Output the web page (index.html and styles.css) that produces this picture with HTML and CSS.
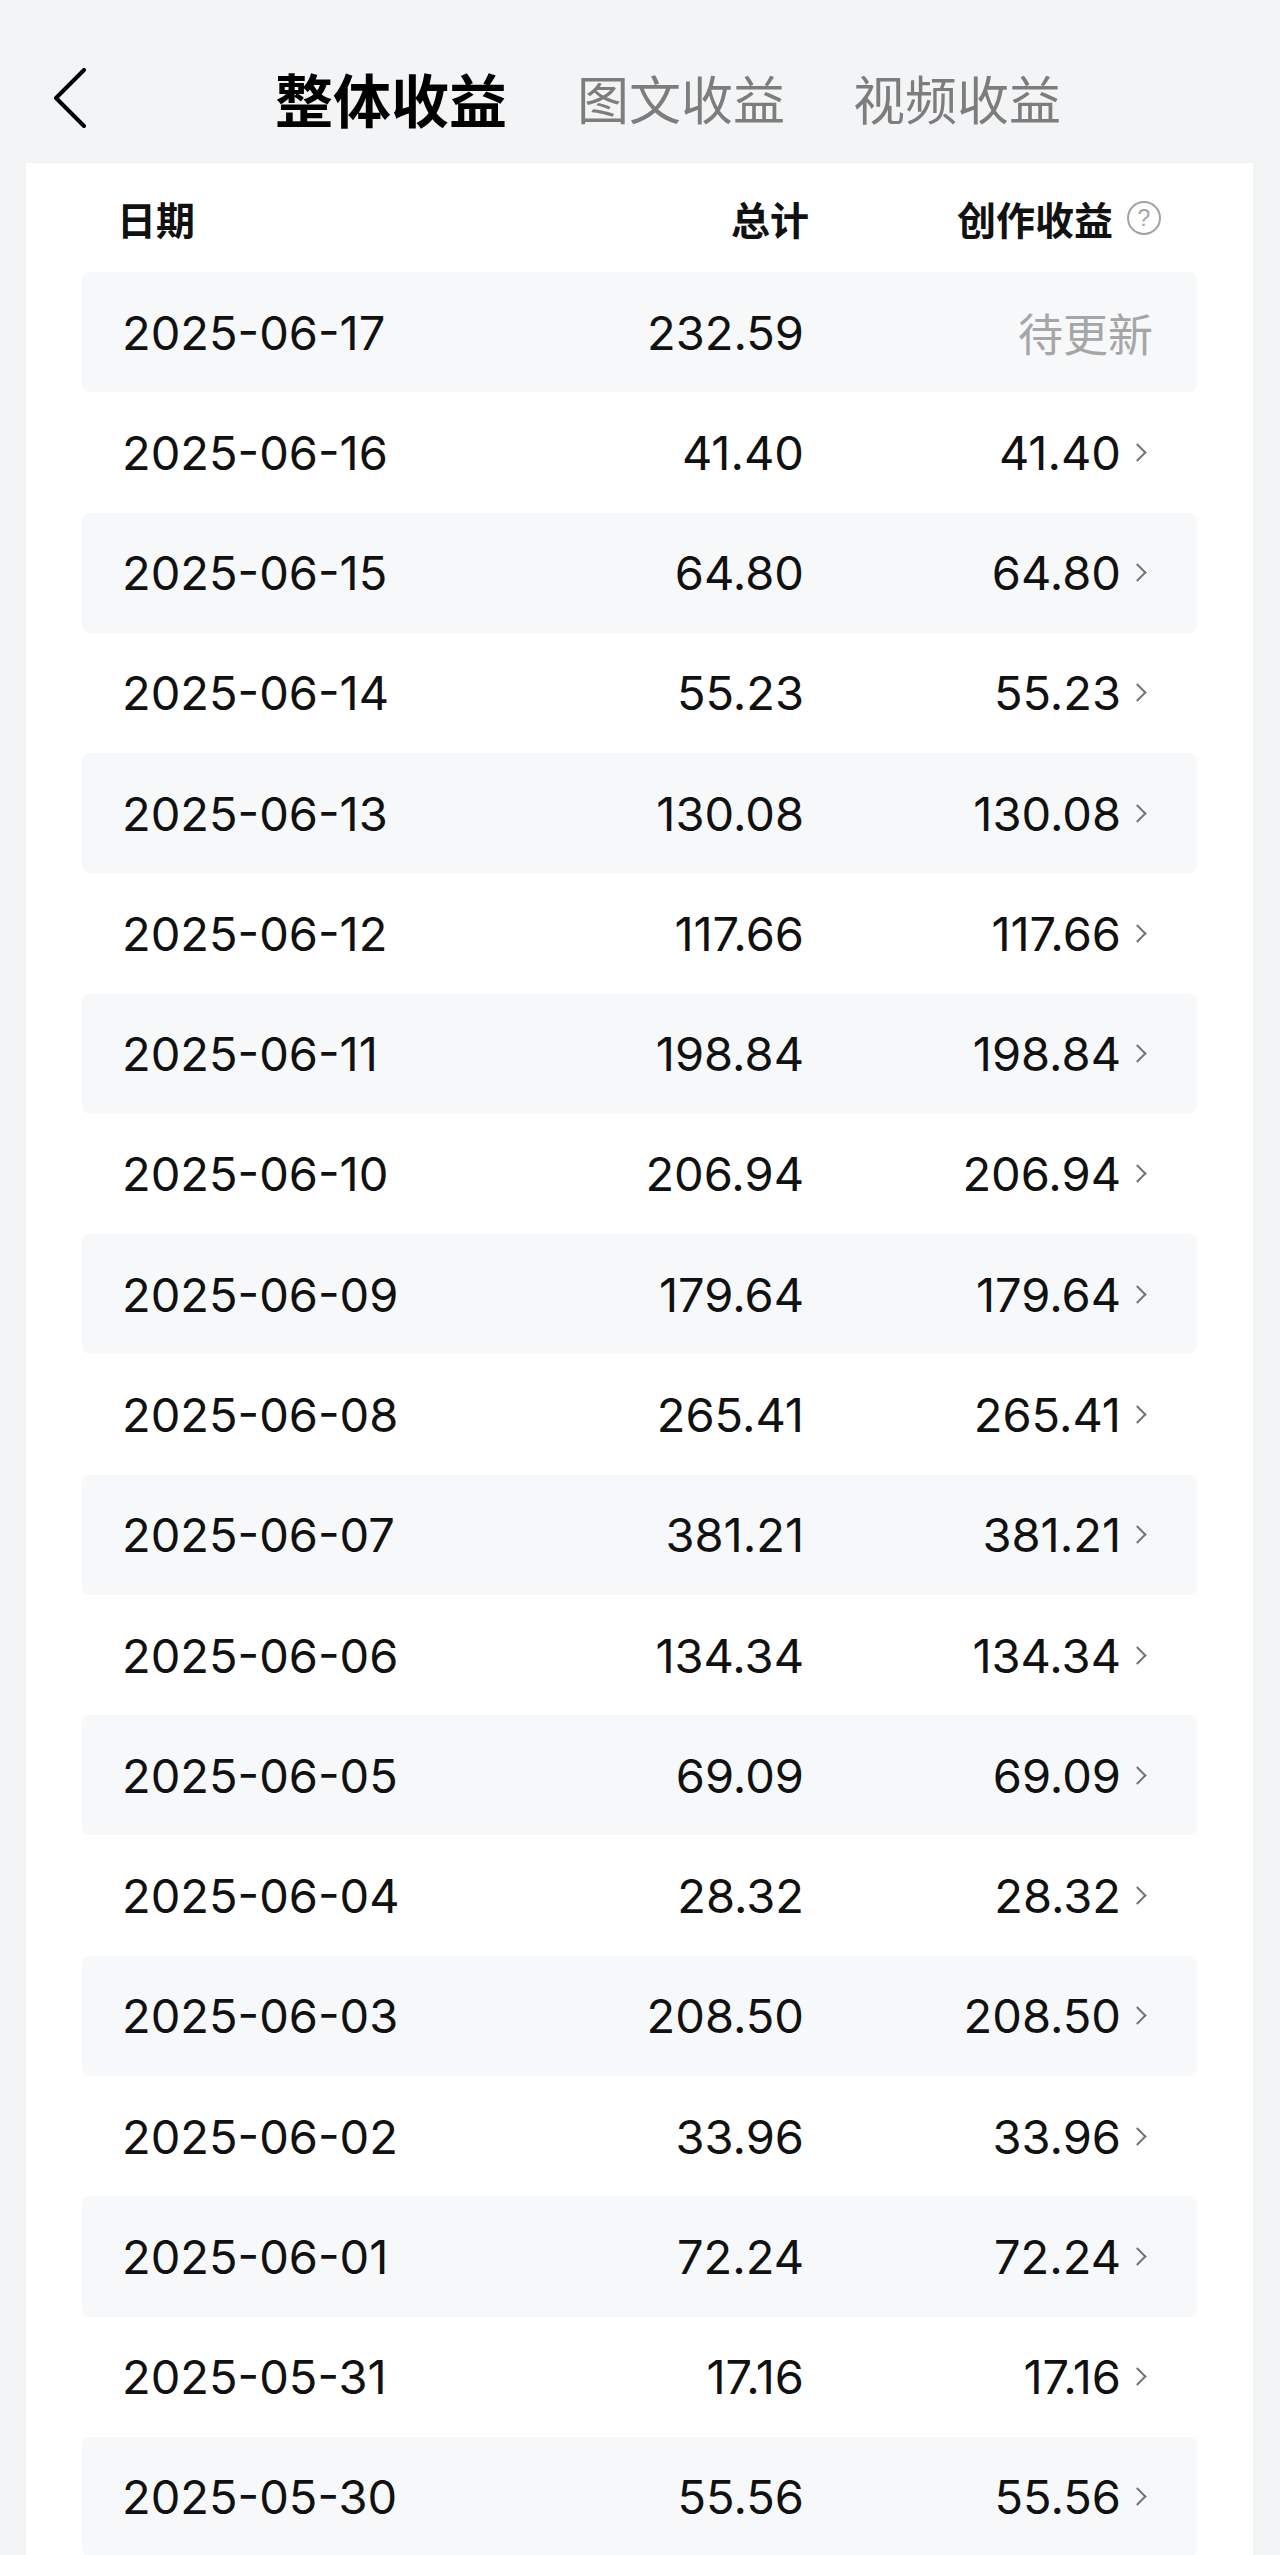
FILE: index.html
```html
<!DOCTYPE html>
<html lang="zh-CN">
<head>
  <meta charset="UTF-8" />
  <meta name="viewport" content="width=device-width, initial-scale=1.0"/>
  <title>整体收益</title>
  <link rel="stylesheet" href="styles.css">
</head>
<body>
  <div class="topbar">
    <div class="nav">
      <a class="back" href="#">
        <svg width="34" height="60" viewBox="0 0 34 60"><path d="M31 2 L3 30 L31 58" fill="none" stroke="#000" stroke-width="4" stroke-linecap="round" stroke-linejoin="round"/></svg>
      </a>
      <div class="tabs">
        <span class="tab active">整体收益</span>
        <span class="tab">图文收益</span>
        <span class="tab">视频收益</span>
      </div>
    </div>
  </div>

  <div class="card">
    <div class="table-head">
      <div class="col-date">日期</div>
      <div class="col-total">总计</div>
      <div class="col-earn">创作收益<span class="help">?</span></div>
    </div>

    <div class="rows">
      <div class="row"><div class="col-date">2025-06-17</div><div class="col-total">232.59</div><div class="col-earn pending">待更新</div></div>
      <div class="row"><div class="col-date">2025-06-16</div><div class="col-total">41.40</div><div class="col-earn">41.40<i class="arrow"></i></div></div>
      <div class="row"><div class="col-date">2025-06-15</div><div class="col-total">64.80</div><div class="col-earn">64.80<i class="arrow"></i></div></div>
      <div class="row"><div class="col-date">2025-06-14</div><div class="col-total">55.23</div><div class="col-earn">55.23<i class="arrow"></i></div></div>
      <div class="row"><div class="col-date">2025-06-13</div><div class="col-total">130.08</div><div class="col-earn">130.08<i class="arrow"></i></div></div>
      <div class="row"><div class="col-date">2025-06-12</div><div class="col-total">117.66</div><div class="col-earn">117.66<i class="arrow"></i></div></div>
      <div class="row"><div class="col-date">2025-06-11</div><div class="col-total">198.84</div><div class="col-earn">198.84<i class="arrow"></i></div></div>
      <div class="row"><div class="col-date">2025-06-10</div><div class="col-total">206.94</div><div class="col-earn">206.94<i class="arrow"></i></div></div>
      <div class="row"><div class="col-date">2025-06-09</div><div class="col-total">179.64</div><div class="col-earn">179.64<i class="arrow"></i></div></div>
      <div class="row"><div class="col-date">2025-06-08</div><div class="col-total">265.41</div><div class="col-earn">265.41<i class="arrow"></i></div></div>
      <div class="row"><div class="col-date">2025-06-07</div><div class="col-total">381.21</div><div class="col-earn">381.21<i class="arrow"></i></div></div>
      <div class="row"><div class="col-date">2025-06-06</div><div class="col-total">134.34</div><div class="col-earn">134.34<i class="arrow"></i></div></div>
      <div class="row"><div class="col-date">2025-06-05</div><div class="col-total">69.09</div><div class="col-earn">69.09<i class="arrow"></i></div></div>
      <div class="row"><div class="col-date">2025-06-04</div><div class="col-total">28.32</div><div class="col-earn">28.32<i class="arrow"></i></div></div>
      <div class="row"><div class="col-date">2025-06-03</div><div class="col-total">208.50</div><div class="col-earn">208.50<i class="arrow"></i></div></div>
      <div class="row"><div class="col-date">2025-06-02</div><div class="col-total">33.96</div><div class="col-earn">33.96<i class="arrow"></i></div></div>
      <div class="row"><div class="col-date">2025-06-01</div><div class="col-total">72.24</div><div class="col-earn">72.24<i class="arrow"></i></div></div>
      <div class="row"><div class="col-date">2025-05-31</div><div class="col-total">17.16</div><div class="col-earn">17.16<i class="arrow"></i></div></div>
      <div class="row"><div class="col-date">2025-05-30</div><div class="col-total">55.56</div><div class="col-earn">55.56<i class="arrow"></i></div></div>
    </div>
  </div>
</body>
</html>
```

FILE: styles.css
```css
body {
  margin: 0;
  font-family: Inter, "Noto Sans CJK SC", sans-serif;
  background-color: #f3f4f6;
  color: #111;
  overflow: hidden;
}

.topbar {
  height: 163px;
  box-sizing: border-box;
  padding-top: 63px;
}

.nav {
  height: 70px;
  display: flex;
  align-items: center;
}

.back {
  display: flex;
  margin-left: 53px;
  margin-right: 188px;
}

.tabs {
  display: flex;
  align-items: center;
  font-family: "Noto Sans CJK SC", sans-serif;
}

.tab {
  font-size: 52px;
  color: #7d7d7d;
  margin-right: 68px;
  line-height: 1;
}

.tab.active {
  font-size: 58px;
  font-weight: 700;
  color: #000;
  margin-right: 70px;
}

.card {
  margin: 0 27px 0 26px;
  background-color: #ffffff;
  min-height: 2392px;
}

.table-head {
  height: 109px;
  margin: 0 56px;
  padding: 0 36px 0 35px;
  display: flex;
  align-items: center;
  font-family: "Noto Sans CJK SC", sans-serif;
  font-size: 39px;
  font-weight: 700;
  color: #111;
}

.table-head .col-date {
  flex: 1;
}

.table-head .col-total {
  text-align: right;
}

.table-head .col-earn {
  width: 352px;
  display: flex;
  justify-content: flex-end;
  align-items: center;
}

.help {
  width: 30px;
  height: 30px;
  margin-left: 14px;
  border: 2px solid #a3a3a3;
  border-radius: 50%;
  color: #a3a3a3;
  font-family: "Liberation Sans", sans-serif;
  font-size: 23px;
  font-weight: 400;
  line-height: 30px;
  text-align: center;
}

.rows {
  margin: 0 56px;
}

.row {
  height: 120.28px;
  box-sizing: border-box;
  padding: 0 44px 0 40px;
  display: flex;
  align-items: center;
  font-size: 47px;
  border-radius: 8px;
}

.row:nth-child(odd) {
  background-color: #f7f8fa;
}

.row .col-date {
  flex: 1;
}

.row .col-total {
  width: 300px;
  text-align: right;
}

.row .col-earn {
  width: 349px;
  display: flex;
  justify-content: flex-end;
  align-items: center;
}

.row .pending {
  font-family: "Noto Sans CJK SC", sans-serif;
  font-size: 45px;
  color: #a6a6a6;
}

.arrow {
  width: 11px;
  height: 11px;
  margin: 0 9px 0 10px;
  border-top: 2.5px solid #757575;
  border-right: 2.5px solid #757575;
  transform: rotate(45deg);
}
```
